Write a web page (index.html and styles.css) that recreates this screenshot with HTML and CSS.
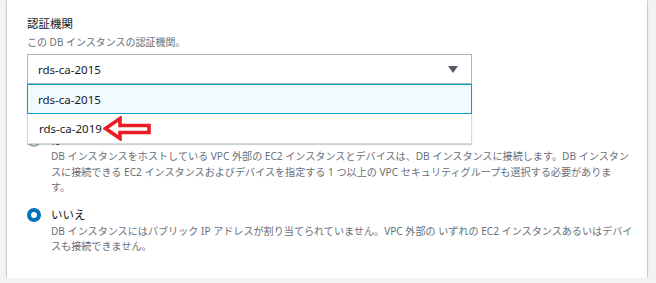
FILE: index.html
```html
<!DOCTYPE html>
<html lang="ja">
<head>
	<meta charset="UTF-8">
	<title>認証機関</title>
	<link rel="stylesheet" href="styles.css">
</head>
<body>
<div class="panel">
	<div class="field">
		<div class="field-label">認証機関</div>
		<div class="field-desc">この DB インスタンスの認証機関。</div>
		<div class="select-wrap">
			<div class="select">
				<span>rds-ca-2015</span>
				<span class="caret"></span>
			</div>
			<ul class="menu">
				<li class="option selected">rds-ca-2015</li>
				<li class="option">rds-ca-2019<svg class="mark" width="48" height="25" viewBox="0 0 48 25"><polygon points="2.5,12.5 17,2.5 17,9.5 46,9.5 46,16.5 17,16.5 17,22.5" fill="#fff" stroke="#ed1c24" stroke-width="3.6"/></svg></li>
			</ul>
		</div>
	</div>
	<div class="radios">
		<div class="radio-row">
			<span class="radio"></span>
			<div class="radio-text">
				<div class="radio-label">はい</div>
				<div class="radio-desc">DB インスタンスをホストしている VPC 外部の EC2 インスタンスとデバイスは、DB インスタンスに接続します。DB インスタン<br>スに接続できる EC2 インスタンスおよびデバイスを指定する 1 つ以上の VPC セキュリティグループも選択する必要がありま<br>す。</div>
			</div>
		</div>
		<div class="radio-row">
			<span class="radio checked"></span>
			<div class="radio-text">
				<div class="radio-label">いいえ</div>
				<div class="radio-desc">DB インスタンスにはパブリック IP アドレスが割り当てられていません。VPC 外部の いずれの EC2 インスタンスあるいはデバイ<br>スも接続できません。</div>
			</div>
		</div>
	</div>
</div>
</body>
</html>
```

FILE: styles.css
```css
body {
	margin: 0;
	background: #f2f3f3;
	font-family: "Noto Sans", "Noto Sans CJK JP", sans-serif;
	color: #16191f;
}

.panel {
	margin-left: 7px;
	width: 640px;
	box-sizing: border-box;
	background: #fff;
	padding: 15px 20px 23px;
	box-shadow: 0 1px 1px 0 rgba(0,28,36,0.35), 1px 1px 1px 0 rgba(0,28,36,0.12), -1px 1px 1px 0 rgba(0,28,36,0.12);
}

.field-label {
	font-size: 11.5px;
	line-height: 18px;
}

.field-desc {
	font-size: 10px;
	line-height: 14px;
	margin-top: 2px;
	color: #687078;
}

.select-wrap {
	position: relative;
	margin-top: 5px;
	width: 445px;
}

.select {
	height: 30px;
	box-sizing: border-box;
	border: 1px solid #aab7b8;
	padding: 0 13px 0 10px;
	display: flex;
	align-items: center;
	justify-content: space-between;
	font-size: 11.5px;
}

.caret {
	width: 0;
	height: 0;
	border-left: 5px solid transparent;
	border-right: 5px solid transparent;
	border-top: 7px solid #545b64;
}

.menu {
	position: absolute;
	top: 100%;
	left: 0;
	right: 0;
	margin: 0;
	padding: 0;
	list-style: none;
	background: #fff;
	border: 1px solid #d5dbdb;
	border-top: none;
	box-shadow: 0 1px 1px rgba(0,28,36,0.2);
	z-index: 2;
}

.option {
	height: 29px;
	box-sizing: border-box;
	padding-left: 10px;
	display: flex;
	align-items: center;
	font-size: 11.5px;
	border: 1px solid transparent;
}

.option.selected {
	background: #f1faff;
	border-color: #00a1c9;
	margin: 0 -1px;
	height: 30px;
}

.mark {
	margin-left: 1px;
}

.radios {
	margin-top: 47px;
}

.radio-row {
	display: flex;
	gap: 10px;
	margin-bottom: 10px;
}

.radio-row:last-child {
	margin-bottom: 0;
}

.radio {
	width: 14px;
	height: 14px;
	box-sizing: border-box;
	border-radius: 50%;
	border: 2px solid #aab7b8;
	margin-top: 2px;
	flex-shrink: 0;
}

.radio.checked {
	border: 4px solid #0073bb;
}

.radio-text {
	flex: 1;
}

.radio-label {
	font-size: 11.5px;
	line-height: 18px;
}

.radio-desc {
	font-size: 10.1px;
	line-height: 15.5px;
	color: #687078;
	white-space: nowrap;
}
```
